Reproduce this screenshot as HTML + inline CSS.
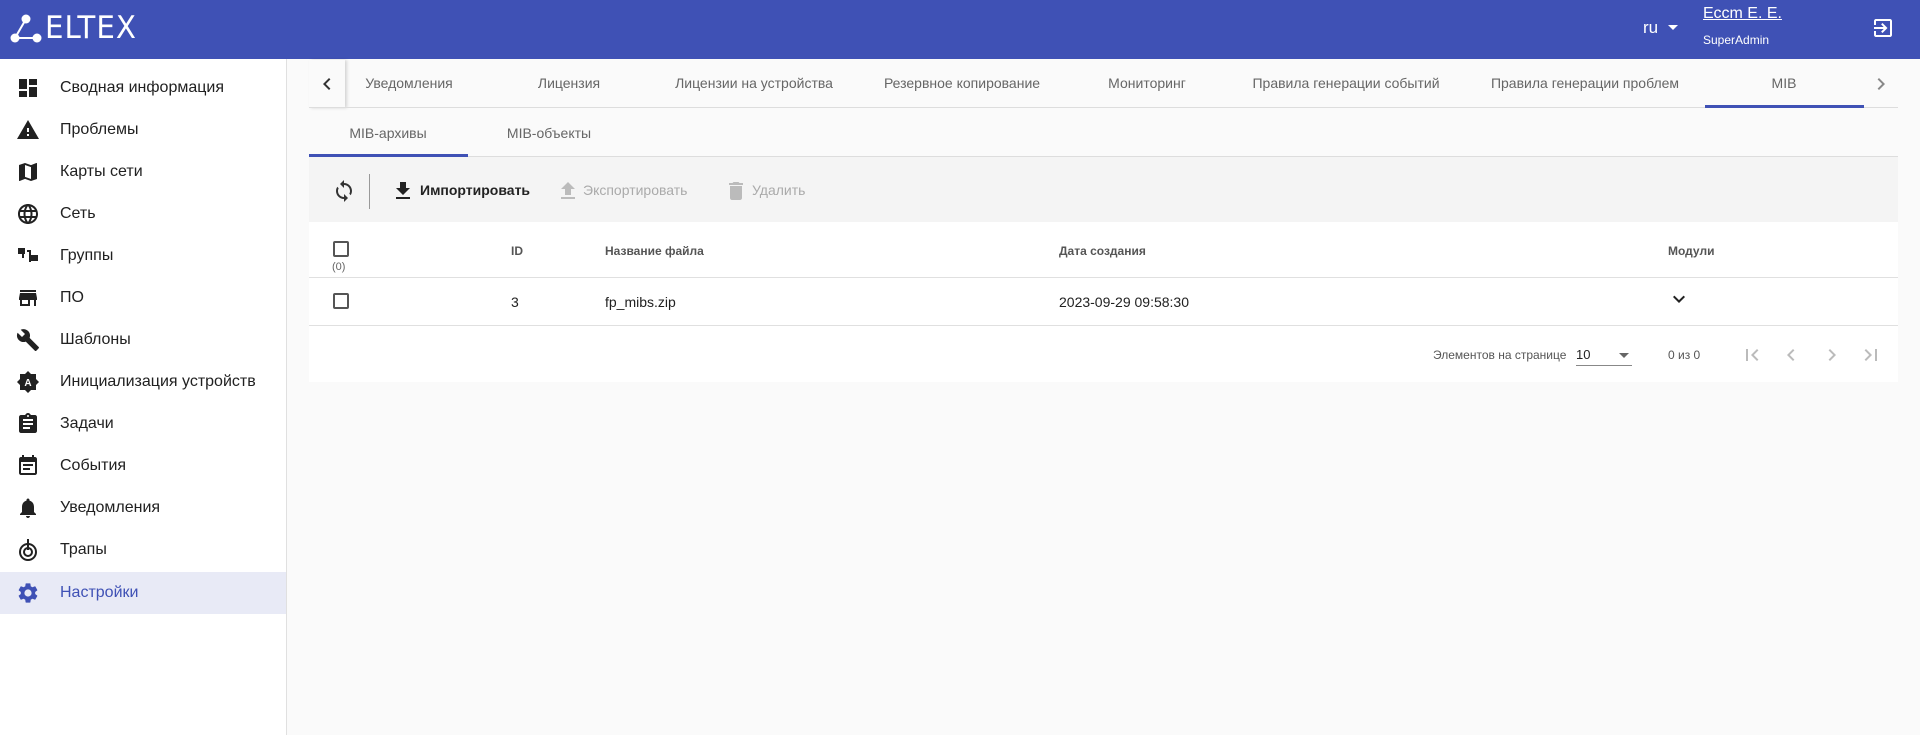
<!DOCTYPE html>
<html><head><meta charset="utf-8"><style>
*{box-sizing:border-box;margin:0;padding:0}
body{width:1920px;height:735px;overflow:hidden;background:#fafafa;font-family:"Liberation Sans",sans-serif;position:relative;color:#212121}
.a{position:absolute;white-space:nowrap}
#hdr{position:absolute;left:0;top:0;width:1920px;height:59px;background:#3f51b5}
#side{position:absolute;left:0;top:59px;width:287px;height:676px;background:#fff;border-right:1px solid #e0e0e0}
.it{position:absolute;left:0;width:286px;height:42px;font-size:16px;color:#212121}
.it span{position:absolute;left:60px;top:12px}
.it svg{position:absolute;left:16px;top:9px;width:24px;height:24px;fill:#212121}
.tab{position:absolute;top:75px;font-size:14px;color:#666;transform:translateX(-50%)}
.th{position:absolute;top:244px;font-size:12px;color:#555;font-weight:bold}
.td{position:absolute;top:294px;font-size:14px;color:#212121}
.cb{position:absolute;width:16px;height:16px;border:2px solid #555;border-radius:2px}
</style></head><body>
<div id="hdr"></div>
<svg class="a" style="left:10px;top:14px" width="32" height="30" viewBox="0 0 32 30"><g fill="#fff"><circle cx="16" cy="5" r="4.5"/><circle cx="5" cy="24" r="4.5"/><circle cx="27" cy="24" r="4.5"/></g><path d="M16 5L5 24H27" stroke="#fff" stroke-width="2" fill="none"/></svg>
<div class="a" style="left:45px;top:10px;font-size:31px;color:#fff;letter-spacing:1px;transform:scaleX(1.05);transform-origin:left;font-family:'DejaVu Sans Condensed','Liberation Sans',sans-serif;font-weight:300">ELTEX</div>
<div class="a" style="left:1643px;top:18px;font-size:17px;color:#fff">ru</div>
<div class="a" style="left:1668px;top:25px;border-left:5px solid transparent;border-right:5px solid transparent;border-top:5px solid #fff"></div>
<div class="a" style="left:1703px;top:5px;font-size:16px;color:#fff;text-decoration:underline">Ессm E. E.</div>
<div class="a" style="left:1703px;top:33px;font-size:12px;color:#fff">SuperAdmin</div>
<svg class="a" style="left:1871px;top:16px" width="24" height="24" viewBox="0 0 24 24"><path fill="#fff" d="M10.09 15.59L11.5 17l5-5-5-5-1.41 1.41L12.67 11H3v2h9.67l-2.58 2.59zM19 3H5c-1.11 0-2 .9-2 2v4h2V5h14v14H5v-4H3v4c0 1.1.89 2 2 2h14c1.1 0 2-.9 2-2V5c0-1.1-.9-2-2-2z"/></svg>

<div id="side">
<div class="it" style="top:8px"><svg viewBox="0 0 24 24"><path d="M3 13h8V3H3v10zm0 8h8v-6H3v6zm10 0h8V11h-8v10zm0-18v6h8V3h-8z"/></svg><span>Сводная информация</span></div>
<div class="it" style="top:50px"><svg viewBox="0 0 24 24"><path d="M1 21h22L12 2 1 21zm12-3h-2v-2h2v2zm0-4h-2v-4h2v4z"/></svg><span>Проблемы</span></div>
<div class="it" style="top:92px"><svg viewBox="0 0 24 24"><path d="M20.5 3l-.16.03L15 5.1 9 3 3.36 4.9c-.21.07-.36.25-.36.48V20.5c0 .28.22.5.5.5l.16-.03L9 18.9l6 2.1 5.64-1.9c.21-.07.36-.25.36-.48V3.5c0-.28-.22-.5-.5-.5zM15 19l-6-2.11V5l6 2.11V19z"/></svg><span>Карты сети</span></div>
<div class="it" style="top:134px"><svg viewBox="0 0 24 24"><path d="M12 2C6.48 2 2 6.48 2 12s4.48 10 10 10 10-4.48 10-10S17.520 2 12 2zm6.9 6h-2.950a15.7 15.7 0 00-1.38-3.56A8.030 8.030 0 0118.9 8zM12 4.04c.83 1.2 1.48 2.53 1.91 3.96h-3.82c.43-1.43 1.08-2.76 1.91-3.96zM4.26 14C4.1 13.36 4 12.69 4 12s.1-1.36.26-2h3.38c-.08.66-.14 1.32-.14 2 0 .68.06 1.34.14 2H4.26zm.82 2h2.95c.32 1.25.78 2.45 1.38 3.56A7.99 7.99 0 015.08 16zm2.95-8H5.08a7.99 7.99 0 014.33-3.56A15.65 15.65 0 008.03 8zM12 19.96c-.83-1.2-1.48-2.53-1.91-3.96h3.82c-.43 1.43-1.08 2.76-1.91 3.96zM14.34 14H9.66c-.09-.66-.16-1.32-.16-2 0-.68.07-1.35.16-2h4.68c.09.65.16 1.32.16 2 0 .68-.07 1.34-.16 2zm.25 5.56c.6-1.11 1.06-2.31 1.38-3.56h2.950a8.030 8.030 0 01-4.330 3.56zM16.36 14c.08-.66.14-1.32.14-2 0-.68-.06-1.34-.14-2h3.38c.16.64.26 1.31.26 2s-.1 1.36-.26 2h-3.38z"/></svg><span>Сеть</span></div>
<div class="it" style="top:176px"><svg viewBox="0 0 24 24"><path d="M2 4h7v6H2zM11 6h4v2h-4zM13 8h2v10h-2zM15 11h7v6h-7zM6 10h2v4H6z"/></svg><span>Группы</span></div>
<div class="it" style="top:218px"><svg viewBox="0 0 24 24"><path d="M20 4H4v2h16V4zm1 10v-2l-1-5H4l-1 5v2h1v6h10v-6h4v6h2v-6h1zm-9 4H6v-4h6v4z"/></svg><span>ПО</span></div>
<div class="it" style="top:260px"><svg viewBox="0 0 24 24"><path d="M22.7 19l-9.1-9.1c.9-2.3.4-5-1.5-6.9-2-2-5-2.4-7.4-1.3L9 6 6 9 1.6 4.7C.4 7.1.9 10.1 2.9 12.1c1.9 1.9 4.6 2.4 6.9 1.5l9.1 9.1c.4.4 1 .4 1.4 0l2.3-2.3c.5-.4.5-1.1.1-1.4z"/></svg><span>Шаблоны</span></div>
<div class="it" style="top:302px"><svg viewBox="0 0 24 24"><path d="M12 1l3 3h5v5l3 3-3 3v5h-5l-3 3-3-3H4v-5l-3-3 3-3V4h5z"/><text x="12" y="16" font-size="10" font-weight="bold" fill="#fff" text-anchor="middle" font-family="Liberation Sans">A</text></svg><span>Инициализация устройств</span></div>
<div class="it" style="top:344px"><svg viewBox="0 0 24 24"><path d="M19 3h-4.18C14.4 1.84 13.3 1 12 1s-2.4.84-2.82 2H5c-1.1 0-2 .9-2 2v14c0 1.1.9 2 2 2h14c1.1 0 2-.9 2-2V5c0-1.1-.9-2-2-2zm-7 0c.55 0 1 .45 1 1s-.45 1-1 1-1-.45-1-1 .45-1 1-1zm2 14H7v-2h7v2zm3-4H7v-2h10v2zm0-4H7V7h10v2z"/></svg><span>Задачи</span></div>
<div class="it" style="top:386px"><svg viewBox="0 0 24 24"><path d="M17 10H7v2h10v-2zm2-7h-1V1h-2v2H8V1H6v2H5c-1.11 0-2 .9-2 2v14c0 1.1.89 2 2 2h14c1.1 0 2-.9 2-2V5c0-1.1-.9-2-2-2zm0 16H5V8h14v11zm-5-5H7v2h7v-2z"/></svg><span>События</span></div>
<div class="it" style="top:428px"><svg viewBox="0 0 24 24"><path d="M12 22c1.1 0 2-.9 2-2h-4c0 1.1.89 2 2 2zm6-6v-5c0-3.07-1.64-5.64-4.5-6.32V4c0-.83-.67-1.5-1.5-1.5s-1.5.67-1.5 1.5v.68C7.63 5.36 6 7.920 6 11v5l-2 2v1h16v-1l-2-2z"/></svg><span>Уведомления</span></div>
<div class="it" style="top:470px"><svg viewBox="0 0 24 24"><path d="M12 5a9 9 0 100 18 9 9 0 000-18zm0 16a7 7 0 110-14 7 7 0 010 14zm0-12a5 5 0 100 10 5 5 0 000-10zm0 8a3 3 0 110-6 3 3 0 010 6z"/><rect x="11" y="1" width="2" height="11"/></svg><span>Трапы</span></div>
<div class="it" style="top:513px;background:#e8eaf6;color:#3f51b5"><svg viewBox="0 0 24 24" style="fill:#3f51b5"><path d="M19.14 12.94c.04-.3.06-.61.06-.94 0-.32-.02-.64-.07-.94l2.03-1.58a.49.49 0 00.12-.61l-1.92-3.32a.49.49 0 00-.59-.22l-2.39.96c-.5-.38-1.03-.7-1.62-.94l-.36-2.54a.48.48 0 00-.48-.41h-3.84c-.24 0-.43.17-.47.41l-.36 2.54c-.59.24-1.13.57-1.62.94l-2.39-.96a.48.48 0 00-.59.22L2.74 8.87c-.12.21-.08.47.12.61l2.03 1.58c-.05.3-.09.63-.09.94s.02.64.07.94l-2.03 1.58a.49.49 0 00-.12.61l1.92 3.32c.12.22.37.29.59.22l2.39-.96c.5.38 1.03.7 1.62.94l.36 2.54c.05.24.24.41.48.41h3.84c.24 0 .44-.17.47-.41l.36-2.54c.59-.24 1.13-.56 1.62-.94l2.39.96c.22.08.47 0 .59-.22l1.92-3.32c.12-.22.07-.47-.12-.61l-2.01-1.58zM12 15.6A3.6 3.6 0 1112 8.4a3.6 3.6 0 010 7.2z"/></svg><span>Настройки</span></div>
</div>

<div class="a" style="left:309px;top:60px;width:36px;height:48px;background:#fafafa;box-shadow:2px 0 3px rgba(0,0,0,.15)"></div>
<svg class="a" style="left:315px;top:72px" width="24" height="24" viewBox="0 0 24 24"><path fill="#333" d="M15.41 7.41L14 6l-6 6 6 6 1.41-1.41L10.83 12z"/></svg>
<div class="a" style="left:309px;top:107px;width:1589px;height:1px;background:#ddd"></div>
<div class="tab" style="left:409px">Уведомления</div>
<div class="tab" style="left:569px">Лицензия</div>
<div class="tab" style="left:754px">Лицензии на устройства</div>
<div class="tab" style="left:962px">Резервное копирование</div>
<div class="tab" style="left:1147px">Мониторинг</div>
<div class="tab" style="left:1346px">Правила генерации событий</div>
<div class="tab" style="left:1585px">Правила генерации проблем</div>
<div class="tab" style="left:1784px">MIB</div>
<div class="a" style="left:1705px;top:105px;width:159px;height:3px;background:#3f51b5"></div>
<svg class="a" style="left:1869px;top:72px" width="24" height="24" viewBox="0 0 24 24"><path fill="#888" d="M10 6L8.59 7.41 13.17 12l-4.58 4.59L10 18l6-6z"/></svg>

<div class="tab" style="left:388px;top:125px">MIB-архивы</div>
<div class="tab" style="left:549px;top:125px">MIB-объекты</div>
<div class="a" style="left:309px;top:156px;width:1589px;height:1px;background:#ddd"></div>
<div class="a" style="left:309px;top:154px;width:159px;height:3px;background:#3f51b5"></div>

<div class="a" style="left:309px;top:157px;width:1589px;height:65px;background:#f4f4f4"></div>
<svg class="a" style="left:332px;top:179px" width="24" height="24" viewBox="0 0 24 24"><path fill="#333" d="M12 4V1L8 5l4 4V6c3.31 0 6 2.69 6 6 0 1.01-.25 1.97-.7 2.8l1.46 1.46A7.93 7.93 0 0020 12c0-4.42-3.58-8-8-8zm0 14c-3.31 0-6-2.69-6-6 0-1.01.25-1.97.7-2.8L5.24 7.74A7.93 7.93 0 004 12c0 4.42 3.58 8 8 8v3l4-4-4-4v3z"/></svg>
<div class="a" style="left:369px;top:174px;width:1px;height:35px;background:#999"></div>
<svg class="a" style="left:391px;top:179px" width="24" height="24" viewBox="0 0 24 24"><path fill="#222" d="M19 9h-4V3H9v6H5l7 7 7-7zM5 18v2h14v-2H5z"/></svg>
<div class="a" style="left:420px;top:182px;font-size:14px;color:#222;font-weight:bold">Импортировать</div>
<svg class="a" style="left:556px;top:179px" width="24" height="24" viewBox="0 0 24 24"><path fill="#bbb" d="M9 16h6v-6h4l-7-7-7 7h4zm-4 2h14v2H5z"/></svg>
<div class="a" style="left:583px;top:182px;font-size:14px;color:#aaa">Экспортировать</div>
<svg class="a" style="left:724px;top:179px" width="24" height="24" viewBox="0 0 24 24"><path fill="#bbb" d="M6 19c0 1.1.9 2 2 2h8c1.1 0 2-.9 2-2V7H6v12zM19 4h-3.5l-1-1h-5l-1 1H5v2h14V4z"/></svg>
<div class="a" style="left:752px;top:182px;font-size:14px;color:#aaa">Удалить</div>

<div class="a" style="left:309px;top:222px;width:1589px;height:160px;background:#fff"></div>
<div class="cb" style="left:333px;top:241px"></div>
<div class="a" style="left:332px;top:261px;font-size:11px;color:#666">(0)</div>
<div class="th" style="left:511px">ID</div>
<div class="th" style="left:605px">Название файла</div>
<div class="th" style="left:1059px">Дата создания</div>
<div class="th" style="left:1668px">Модули</div>
<div class="a" style="left:309px;top:277px;width:1589px;height:1px;background:#e0e0e0"></div>
<div class="cb" style="left:333px;top:293px"></div>
<div class="td" style="left:511px">3</div>
<div class="td" style="left:605px">fp_mibs.zip</div>
<div class="td" style="left:1059px">2023-09-29 09:58:30</div>
<svg class="a" style="left:1667px;top:287px" width="24" height="24" viewBox="0 0 24 24"><path fill="#222" d="M16.59 8.59L12 13.17 7.41 8.59 6 10l6 6 6-6z"/></svg>
<div class="a" style="left:309px;top:325px;width:1589px;height:1px;background:#e0e0e0"></div>
<div class="a" style="left:1433px;top:348px;font-size:12px;color:#555">Элементов на странице</div>
<div class="a" style="left:1576px;top:347px;font-size:13px;color:#222">10</div>
<div class="a" style="left:1619px;top:353px;border-left:5px solid transparent;border-right:5px solid transparent;border-top:5px solid #666"></div>
<div class="a" style="left:1576px;top:365px;width:56px;height:1px;background:#888"></div>
<div class="a" style="left:1668px;top:348px;font-size:12px;color:#555">0 из 0</div>
<svg class="a" style="left:1740px;top:343px" width="24" height="24" viewBox="0 0 24 24"><path fill="#bbb" d="M18.41 16.59L13.82 12l4.59-4.59L17 6l-6 6 6 6zM6 6h2v12H6z"/></svg>
<svg class="a" style="left:1779px;top:343px" width="24" height="24" viewBox="0 0 24 24"><path fill="#bbb" d="M15.41 7.41L14 6l-6 6 6 6 1.41-1.41L10.83 12z"/></svg>
<svg class="a" style="left:1820px;top:343px" width="24" height="24" viewBox="0 0 24 24"><path fill="#bbb" d="M10 6L8.590 7.41 13.17 12l-4.58 4.59L10 18l6-6z"/></svg>
<svg class="a" style="left:1859px;top:343px" width="24" height="24" viewBox="0 0 24 24"><path fill="#bbb" d="M5.59 7.41L10.18 12l-4.59 4.59L7 18l6-6-6-6zM16 6h2v12h-2z"/></svg>
</body></html>
